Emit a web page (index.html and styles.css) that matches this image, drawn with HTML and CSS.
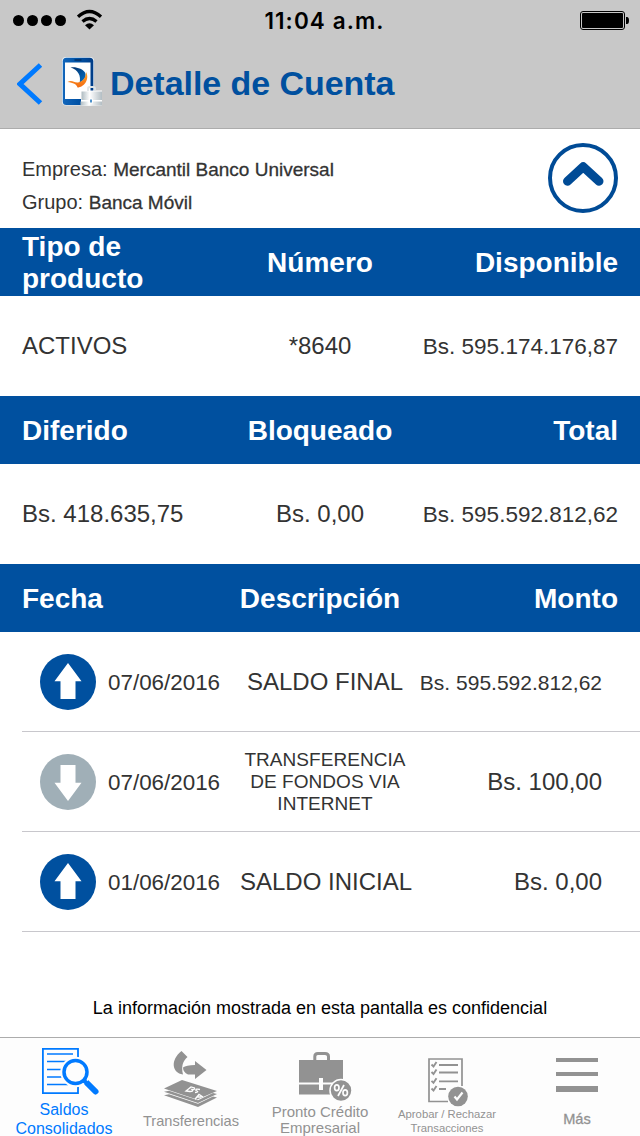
FILE: index.html
```html
<!DOCTYPE html>
<html lang="es">
<head>
<meta charset="utf-8">
<title>Detalle de Cuenta</title>
<link rel="stylesheet" href="styles.css">
</head>
<body>
<div class="app">
  <header class="top">
    <div class="status">
      <svg class="signal" width="92" height="24" viewBox="0 0 92 24">
        <circle cx="5.500" cy="12.500" r="5.500"/><circle cx="19.500" cy="12.500" r="5.500"/><circle cx="33.500" cy="12.500" r="5.500"/><circle cx="47.500" cy="12.500" r="5.500"/>
        <path d="M65 8.800Q76.500-1.800 88 8.800M69.500 13.500Q76.500 7.500 83.500 13.500" fill="none" stroke="#000" stroke-width="3.300"/>
        <path d="M72 17.300Q76.500 13.300 81 17.300L76.500 21.500Z"/>
      </svg>
      <span class="time">11:04 a.m.</span>
      <svg class="battery" width="49" height="19" viewBox="0 0 49 19">
        <rect x=".5" y=".5" width="44" height="18" rx="2.500" fill="none" stroke="#000"/>
        <rect x="2" y="2" width="41" height="15" rx="1"/>
        <path d="M46 6h1q2 0 2 3.500t-2 3.500h-1z"/>
      </svg>
    </div>
    <div class="nav">
      <svg class="back" width="26" height="42" viewBox="0 0 26 42"><path d="M23.500 2L3 21L23.500 40" fill="none" stroke="#007aff" stroke-width="5"/></svg>
      <svg class="logo" width="40" height="49" viewBox="0 0 40 49">
        <defs>
          <linearGradient id="phone" x1="0" y1="0" x2="1" y2="0"><stop offset="0" stop-color="#1266bb"/><stop offset=".5" stop-color="#0052a6"/><stop offset="1" stop-color="#003c86"/></linearGradient>
          <linearGradient id="case" x1="0" y1="0" x2="1" y2="0"><stop offset="0" stop-color="#aebbc1"/><stop offset=".4" stop-color="#fff"/><stop offset="1" stop-color="#b3bec4"/></linearGradient>
          <linearGradient id="wing" x1="0" y1="0" x2="1" y2="1"><stop offset="0" stop-color="#002d68"/><stop offset="1" stop-color="#0874c9"/></linearGradient>
          <linearGradient id="flame" x1="0" y1="0" x2="0" y2="1"><stop offset="0" stop-color="#ffa62a"/><stop offset="1" stop-color="#f26a12"/></linearGradient>
        </defs>
        <rect x="0" y="0" width="32" height="48.500" rx="4" fill="#e9f0f5"/>
        <rect x=".8" y=".8" width="30.500" height="47.200" rx="3.500" fill="url(#phone)"/>
        <rect x="3" y="5.500" width="25.500" height="36.500" fill="#fff"/>
        <path d="M12.500 3h7" stroke="#002b5c" stroke-width="1.300"/>
        <path d="M8.500 10.300C15 9.500 21 12 23 15.500C25 20 22 23 17.500 26C19.500 19 16 13 8.500 10.300Z" fill="url(#wing)"/>
        <path d="M24 15C28 22 22 30.500 15.500 30.500C15 27.500 11 25.500 5.500 25C10 22.500 12 26 16 25.500C21 24.500 24 20.500 24 15Z" fill="url(#flame)"/>
        <rect x="19" y="33.500" width="21" height="15" fill="#fff"/>
        <path d="M26 34v-2.500q0-1.500 2-1.500h3q2 0 2 1.500V34" fill="none" stroke="#dfe4e6" stroke-width="1.800"/>
        <rect x="19.500" y="34.500" width="20.500" height="8.500" fill="url(#case)"/>
        <rect x="18.500" y="44.500" width="21.500" height="4" fill="url(#case)"/>
        <rect x="27.300" y="41.500" width="3.400" height="5" fill="#fff"/><rect x="28" y="42.500" width="2" height="3" fill="#4e91ca"/>
      </svg>
      <h1 class="title">Detalle de Cuenta</h1>
    </div>
  </header>

  <section class="owner">
    <div class="owner-lines">
      <div>Empresa: <span class="strong">Mercantil Banco Universal</span></div>
      <div>Grupo: <span class="strong">Banca Móvil</span></div>
    </div>
    <svg width="70" height="70" viewBox="0 0 70 70" fill="none" stroke="#004b96"><circle cx="35" cy="35" r="33" stroke-width="4"/><path d="M19.500 38.300L35.200 23.800L51 38.300" stroke-width="9" stroke-linecap="round" stroke-linejoin="round"/></svg>
  </section>

  <div class="band"><span class="two">Tipo de producto</span><span>Número</span><span>Disponible</span></div>
  <div class="values"><span>ACTIVOS</span><span>*8640</span><span class="long">Bs. 595.174.176,87</span></div>
  <div class="band"><span>Diferido</span><span>Bloqueado</span><span>Total</span></div>
  <div class="values"><span>Bs. 418.635,75</span><span>Bs. 0,00</span><span class="long">Bs. 595.592.812,62</span></div>
  <div class="band"><span>Fecha</span><span>Descripción</span><span>Monto</span></div>

  <div class="moves">
    <div class="move">
      <svg width="56" height="56" viewBox="0 0 56 56"><circle cx="28" cy="28" r="28" fill="#00509f"/><path d="M28 9L41.500 27.300H35.500V45H20.500V27.300H14.500Z" fill="#fff"/></svg>
      <span class="date">07/06/2016</span><span class="desc">SALDO FINAL</span><span class="amount amount-long">Bs. 595.592.812,62</span>
    </div>
    <div class="move">
      <svg width="56" height="56" viewBox="0 0 56 56"><circle cx="28" cy="28" r="28" fill="#a0afb7"/><path d="M28 47L41.500 28.700H35.500V11H20.500V28.700H14.500Z" fill="#fff"/></svg>
      <span class="date">07/06/2016</span><span class="desc desc-long">TRANSFERENCIA<br>DE FONDOS VIA<br>INTERNET</span><span class="amount">Bs. 100,00</span>
    </div>
    <div class="move">
      <svg width="56" height="56" viewBox="0 0 56 56"><circle cx="28" cy="28" r="28" fill="#00509f"/><path d="M28 9L41.500 27.300H35.500V45H20.500V27.300H14.500Z" fill="#fff"/></svg>
      <span class="date">01/06/2016</span><span class="desc">SALDO INICIAL</span><span class="amount">Bs. 0,00</span>
    </div>
  </div>

  <p class="notice">La información mostrada en esta pantalla es confidencial</p>

  <nav class="tabs">
    <div class="tab tab-balance">
      <svg width="58" height="48" viewBox="0 0 58 48" fill="none" stroke="#007aff">
        <path d="M36 10V.9H.9V45.100H36V38" stroke-width="1.800"/>
        <path d="M5 6H31M5 13.500H24M5 21.500H19M5 29H20M5 36.500H26" stroke-width="1.600"/>
        <path d="M42 32L53.500 43.500" stroke-width="6" stroke-linecap="round"/>
        <circle cx="33.500" cy="24" r="14.300" stroke="#fdfdfd" stroke-width="1.800"/>
        <path d="M41 31.500L46 36.500" stroke-width="4"/>
        <circle cx="33.500" cy="24" r="11.500" fill="#fdfdfd" stroke-width="3.500"/>
      </svg>
      <span>Saldos</span><span>Consolidados</span>
    </div>
    <div class="tab tab-transfer">
      <svg width="54" height="56" viewBox="0 0 54 56" fill="#929292">
        <path d="M17.500 0L23.500 6C19 10 17 15 19 23.500C8 22 6 9 17.500 0Z"/><path d="M19 16.500Q22 14 31 14V10L42.500 19L31 28V23.500H24Q19 21 19 16.500Z"/>
        <path d="M0 44.300L5 43.300L34 52.800L49 45.500L53 46.500L34 56Z"/>
        <path d="M0 40.800L5 39.800L34 49.300L49 42L53 43L34 52Z"/>
        <path d="M0 37.500L18 29L53 40L33 48.500Z"/>
        <path d="M31 48.200L35 43.500L39 46M33 46H37.500" stroke="#fdfdfd" stroke-width="1.400" fill="none"/>
        <path d="M22 40L27 36L30.500 37Q31 39 28 38.500Q30 40.500 26 40.500ZM36 38.500Q31 37.500 32 39.500Q36 41 31 41.500" stroke="#fdfdfd" stroke-width="1.300" fill="none"/>
      </svg>
      <span>Transferencias</span>
    </div>
    <div class="tab tab-credit">
      <svg width="53" height="50" viewBox="0 0 53 50" fill="#929292">
        <path d="M15.800 9V4.500Q15.800 1.500 18.800 1.500H26Q29.500 1.500 29.500 4.500V9" fill="none" stroke="#929292" stroke-width="3"/>
        <path d="M0 8H44V30.500H0ZM0 32.500H44V42.500H0Z"/><path d="M20 26h4v12h-4z" fill="#fdfdfd"/>
        <circle cx="42" cy="38.500" r="11" stroke="#fdfdfd" stroke-width="1.500"/>
        <g fill="none" stroke="#fdfdfd" stroke-width="1.700"><ellipse cx="37.800" cy="35.800" rx="2.200" ry="2.900"/><ellipse cx="46.200" cy="40.800" rx="2.200" ry="2.900"/><path d="M45 33L39 44"/></g>
      </svg>
      <span>Pronto Crédito</span><span>Empresarial</span>
    </div>
    <div class="tab tab-approve">
      <svg width="40" height="49" viewBox="0 0 40 49" fill="none" stroke="#929292">
        <path d="M34 28V1H1V43.500H20" stroke-width="1.700"/>
        <path d="M11 7H30M11 14.500H30M11 23.300H30M11 31H18" stroke-width="1.800"/>
        <path d="M3.500 6.500L5.500 8.500L8.500 4M3.500 14L5.500 16L8.500 11.500M3.500 22.800L5.500 24.800L8.500 20.300M3.500 30.500L5.500 32.500L8.500 28" stroke-width="1.900"/>
        <circle cx="30" cy="38.500" r="9.800" fill="#929292" stroke="none"/><path d="M26.500 38.500L29 41.500L34.500 34.500" stroke="#fdfdfd" stroke-width="2.200"/>
      </svg>
      <span>Aprobar / Rechazar</span><span>Transacciones</span>
    </div>
    <div class="tab tab-more">
      <svg width="42" height="34" viewBox="0 0 42 34" fill="#929292"><path d="M0 0H42V4H0ZM0 14H42V18H0ZM0 28H42V34H0Z"/></svg>
      <span>Más</span>
    </div>
  </nav>
</div>
</body>
</html>
```
FILE: styles.css
```css
* { box-sizing: border-box; }
body { margin: 0; background: #fff; font-family: "Liberation Sans", Arial, sans-serif; color: #333; }
svg { display: block; flex: none; }
.app { width: 640px; height: 1136px; display: flex; flex-direction: column; overflow: hidden; }
.top { height: 129px; flex: none; background: #c8c8c8; border-bottom: 1px solid #acacac; }
.status { height: 40px; display: grid; grid-template-columns: 1fr auto 1fr; align-items: center; padding: 0 11px 0 13px; color: #000; }
.signal { margin-top: -1px; }
.time { font: 600 22.5px/40px Inter, sans-serif; letter-spacing: 1.1px; padding: 1px 0 0 7px; }
.battery { justify-self: end; }
.nav { height: 88px; display: flex; align-items: center; padding: 0 0 0 17px; }
.logo { margin: -6px 0 0 19px; }
.title { margin: -2px 0 0 8px; font-size: 34px; line-height: 40px; letter-spacing: -.05px; color: #00509f; }
.owner { height: 99px; flex: none; display: flex; justify-content: space-between; align-items: center; padding: 0 22px 1px; }
.owner > svg { margin-top: -1px; }
.owner-lines { font-size: 20px; line-height: 33px; padding-top: 16px; }
.strong { font-size: 19px; -webkit-text-stroke: .3px #333; }
.band, .values { flex: none; display: grid; align-items: center; padding: 2px 22px 0; text-align: center; }
.band { height: 68px; background: #00509f; color: #fff; font-size: 28px; font-weight: 700; line-height: 32px; grid-template-columns: 185px 1fr 185px; }
.values { height: 100px; padding-top: 0; font-size: 24px; line-height: 28px; grid-template-columns: 196px 1fr 196px; }
.band span:first-child, .values span:first-child { text-align: left; }
.band span:last-child, .values span:last-child { text-align: right; }
.two { padding-right: 45px; }
.values .long { padding-top: 2px; font-size: 22.5px; white-space: nowrap; }
.moves { flex: none; padding-left: 22px; }
.move { height: 100px; display: grid; grid-template-columns: 56px 144px 170px 1fr; align-items: center; padding: 0 38px 0 18px; border-bottom: 1px solid #c8c7cc; font-size: 24px; line-height: 28px; }
.date { font-size: 22.4px; padding: 2px 0 0 12px; }
.desc { text-align: center; white-space: nowrap; }
.desc-long { font-size: 19px; line-height: 22px; letter-spacing: .05px; }
.amount { display: flex; justify-content: flex-end; white-space: nowrap; }
.amount-long { padding-top: 2px; font-size: 21px; }
.notice { flex: 1; margin: 0; padding-top: 65px; text-align: center; color: #000; font-size: 18px; line-height: 22px; }
.tabs { height: 99px; flex: none; display: grid; grid-template-columns: repeat(5, 128px); border-top: 1px solid #acacac; background: #fdfdfd; color: #929292; font-size: 15px; line-height: 16px; }
.tab { display: flex; flex-direction: column; align-items: center; white-space: nowrap; }
.tab-balance { padding-top: 10px; color: #007aff; font-size: 16px; line-height: 19px; }
.tab-balance svg { margin: 0 0 4px 13px; }
.tab-transfer { padding: 13px 2px 0 0; }
.tab-transfer svg { margin-bottom: 6px; }
.tab-transfer span { font-size: 14.600px; }
.tab-credit { padding-top: 14px; }
.tab-credit svg { margin: 0 0 2px 11px; }
.tab-approve { padding: 20px 2px 0 0; font-size: 11.300px; line-height: 14px; }
.tab-approve svg { margin-left: 2px; }
.tab-more { padding-top: 20px; }
.tab-more svg { margin: 0 0 19px 2px; }
.tab-more span { margin-left: 2px; font-size: 14.600px; -webkit-text-stroke: .3px #929292; }
```
